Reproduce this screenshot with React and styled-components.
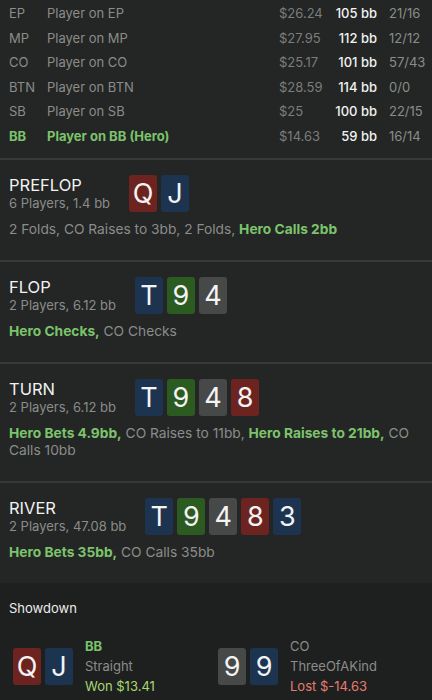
import React from "react";
import styled, { createGlobalStyle } from "styled-components";

const GlobalStyle = createGlobalStyle`
  body {
    margin: 0;
    background: #232624;
    font-family: Inter, "Noto Sans", "Liberation Sans", sans-serif;
    -webkit-font-smoothing: antialiased;
  }
`;

const players = [
  { pos: "EP", name: "Player on EP", money: "$26.24", bb: "105 bb", hands: "21/16" },
  { pos: "MP", name: "Player on MP", money: "$27.95", bb: "112 bb", hands: "12/12" },
  { pos: "CO", name: "Player on CO", money: "$25.17", bb: "101 bb", hands: "57/43" },
  { pos: "BTN", name: "Player on BTN", money: "$28.59", bb: "114 bb", hands: "0/0" },
  { pos: "SB", name: "Player on SB", money: "$25", bb: "100 bb", hands: "22/15" },
  { pos: "BB", name: "Player on BB (Hero)", money: "$14.63", bb: "59 bb", hands: "16/14", hero: true },
];

const streets = [
  {
    title: "PREFLOP",
    info: "6 Players, 1.4 bb",
    cards: [["Q", "red"], ["J", "blue"]],
    actions: [
      ["2 Folds, CO Raises to 3bb, 2 Folds, "],
      ["Hero Calls 2bb", true],
    ],
  },
  {
    title: "FLOP",
    info: "2 Players, 6.12 bb",
    cards: [["T", "blue"], ["9", "green"], ["4", "grey"]],
    actions: [["Hero Checks,", true], [" CO Checks"]],
  },
  {
    title: "TURN",
    info: "2 Players, 6.12 bb",
    cards: [["T", "blue"], ["9", "green"], ["4", "grey"], ["8", "red"]],
    actions: [
      ["Hero Bets 4.9bb,", true],
      [" CO Raises to 11bb, "],
      ["Hero Raises to 21bb,", true],
      [" CO Calls 10bb"],
    ],
  },
  {
    title: "RIVER",
    info: "2 Players, 47.08 bb",
    cards: [["T", "blue"], ["9", "green"], ["4", "grey"], ["8", "red"], ["3", "blue"]],
    actions: [["Hero Bets 35bb,", true], [" CO Calls 35bb"]],
  },
];

const suitColors = {
  red: "#6d2420",
  blue: "#1d3451",
  green: "#2c5b22",
  grey: "#474848",
};

const Table = styled.div`
  padding: 1px 9px 10px;
  border-bottom: 2px solid #363938;
`;

const Row = styled.div`
  display: grid;
  grid-template-columns: 38px 1fr 56px 42px 46px;
  align-items: center;
  height: 24.5px;
  font-size: 13px;
  color: ${(p) => (p.$hero ? "#7cc36c" : "#8b8c8b")};
  font-weight: ${(p) => (p.$hero ? 700 : 400)};
`;

const Money = styled.span`
  color: #7c7d7c;
  font-weight: 400;
`;

const Stack = styled.span`
  color: #f2f2f2;
  font-weight: 500;
  text-align: right;
`;

const Hands = styled.span`
  color: #8b8c8b;
  font-weight: 400;
  padding-left: 12px;
`;

const Street = styled.section`
  padding: 15px 9px 22px;
  border-bottom: 2px solid #363938;
  &:last-of-type {
    border-bottom: none;
    padding-bottom: 22px;
  }
`;

const StreetHead = styled.div`
  display: flex;
  align-items: center;
  gap: 19px;
`;

const Title = styled.div`
  font-size: 16.5px;
  line-height: 20px;
  color: #f2f2f2;
`;

const Info = styled.div`
  font-size: 13px;
  line-height: 17px;
  color: #8b8c8b;
`;

const Cards = styled.div`
  display: flex;
  gap: 4px;
`;

const Card = styled.div`
  width: 28px;
  height: 37px;
  border-radius: 3px;
  background: ${(p) => suitColors[p.$suit]};
  color: #f4f4f4;
  font-size: 27px;
  display: flex;
  align-items: center;
  justify-content: center;
`;

const Actions = styled.p`
  margin: 9px 0 0;
  font-size: 13.75px;
  line-height: 17px;
  color: #8b8c8b;
`;

const Hero = styled.span`
  color: #7cc36c;
  font-weight: 700;
`;

const Showdown = styled.div`
  background: #1e201f;
  padding: 17px 9px 10px;
`;

const ShowdownTitle = styled.div`
  font-size: 13px;
  color: #ececec;
  margin-bottom: 20px;
`;

const Results = styled.div`
  display: grid;
  grid-template-columns: 205px 1fr;
  padding-left: 4px;
`;

const Result = styled.div`
  display: flex;
  align-items: center;
  gap: 12px;
`;

const ResultText = styled.div`
  font-size: 13px;
  line-height: 20px;
  color: #8b8c8b;
`;

const Who = styled.div`
  color: ${(p) => (p.$hero ? "#7cc36c" : "#8b8c8b")};
  font-weight: ${(p) => (p.$hero ? 700 : 400)};
`;

const Outcome = styled.div`
  color: ${(p) => (p.$won ? "#a6d872" : "#e57d6e")};
`;

const results = [
  { cards: [["Q", "red"], ["J", "blue"]], who: "BB", hand: "Straight", outcome: "Won $13.41", hero: true, won: true },
  { cards: [["9", "grey"], ["9", "blue"]], who: "CO", hand: "ThreeOfAKind", outcome: "Lost $-14.63" },
];

export default function App() {
  return (
    <>
      <GlobalStyle />
      <Table>
        {players.map((p) => (
          <Row key={p.pos} $hero={p.hero}>
            <span>{p.pos}</span>
            <span>{p.name}</span>
            <Money>{p.money}</Money>
            <Stack>{p.bb}</Stack>
            <Hands>{p.hands}</Hands>
          </Row>
        ))}
      </Table>
      {streets.map((s) => (
        <Street key={s.title}>
          <StreetHead>
            <div>
              <Title>{s.title}</Title>
              <Info>{s.info}</Info>
            </div>
            <Cards>
              {s.cards.map(([r, c], i) => (
                <Card key={i} $suit={c}>{r}</Card>
              ))}
            </Cards>
          </StreetHead>
          <Actions>
            {s.actions.map(([t, hero], i) =>
              hero ? <Hero key={i}>{t}</Hero> : <span key={i}>{t}</span>
            )}
          </Actions>
        </Street>
      ))}
      <Showdown>
        <ShowdownTitle>Showdown</ShowdownTitle>
        <Results>
          {results.map((r) => (
            <Result key={r.who}>
              <Cards>
                {r.cards.map(([rank, c], i) => (
                  <Card key={i} $suit={c}>{rank}</Card>
                ))}
              </Cards>
              <ResultText>
                <Who $hero={r.hero}>{r.who}</Who>
                <div>{r.hand}</div>
                <Outcome $won={r.won}>{r.outcome}</Outcome>
              </ResultText>
            </Result>
          ))}
        </Results>
      </Showdown>
    </>
  );
}
